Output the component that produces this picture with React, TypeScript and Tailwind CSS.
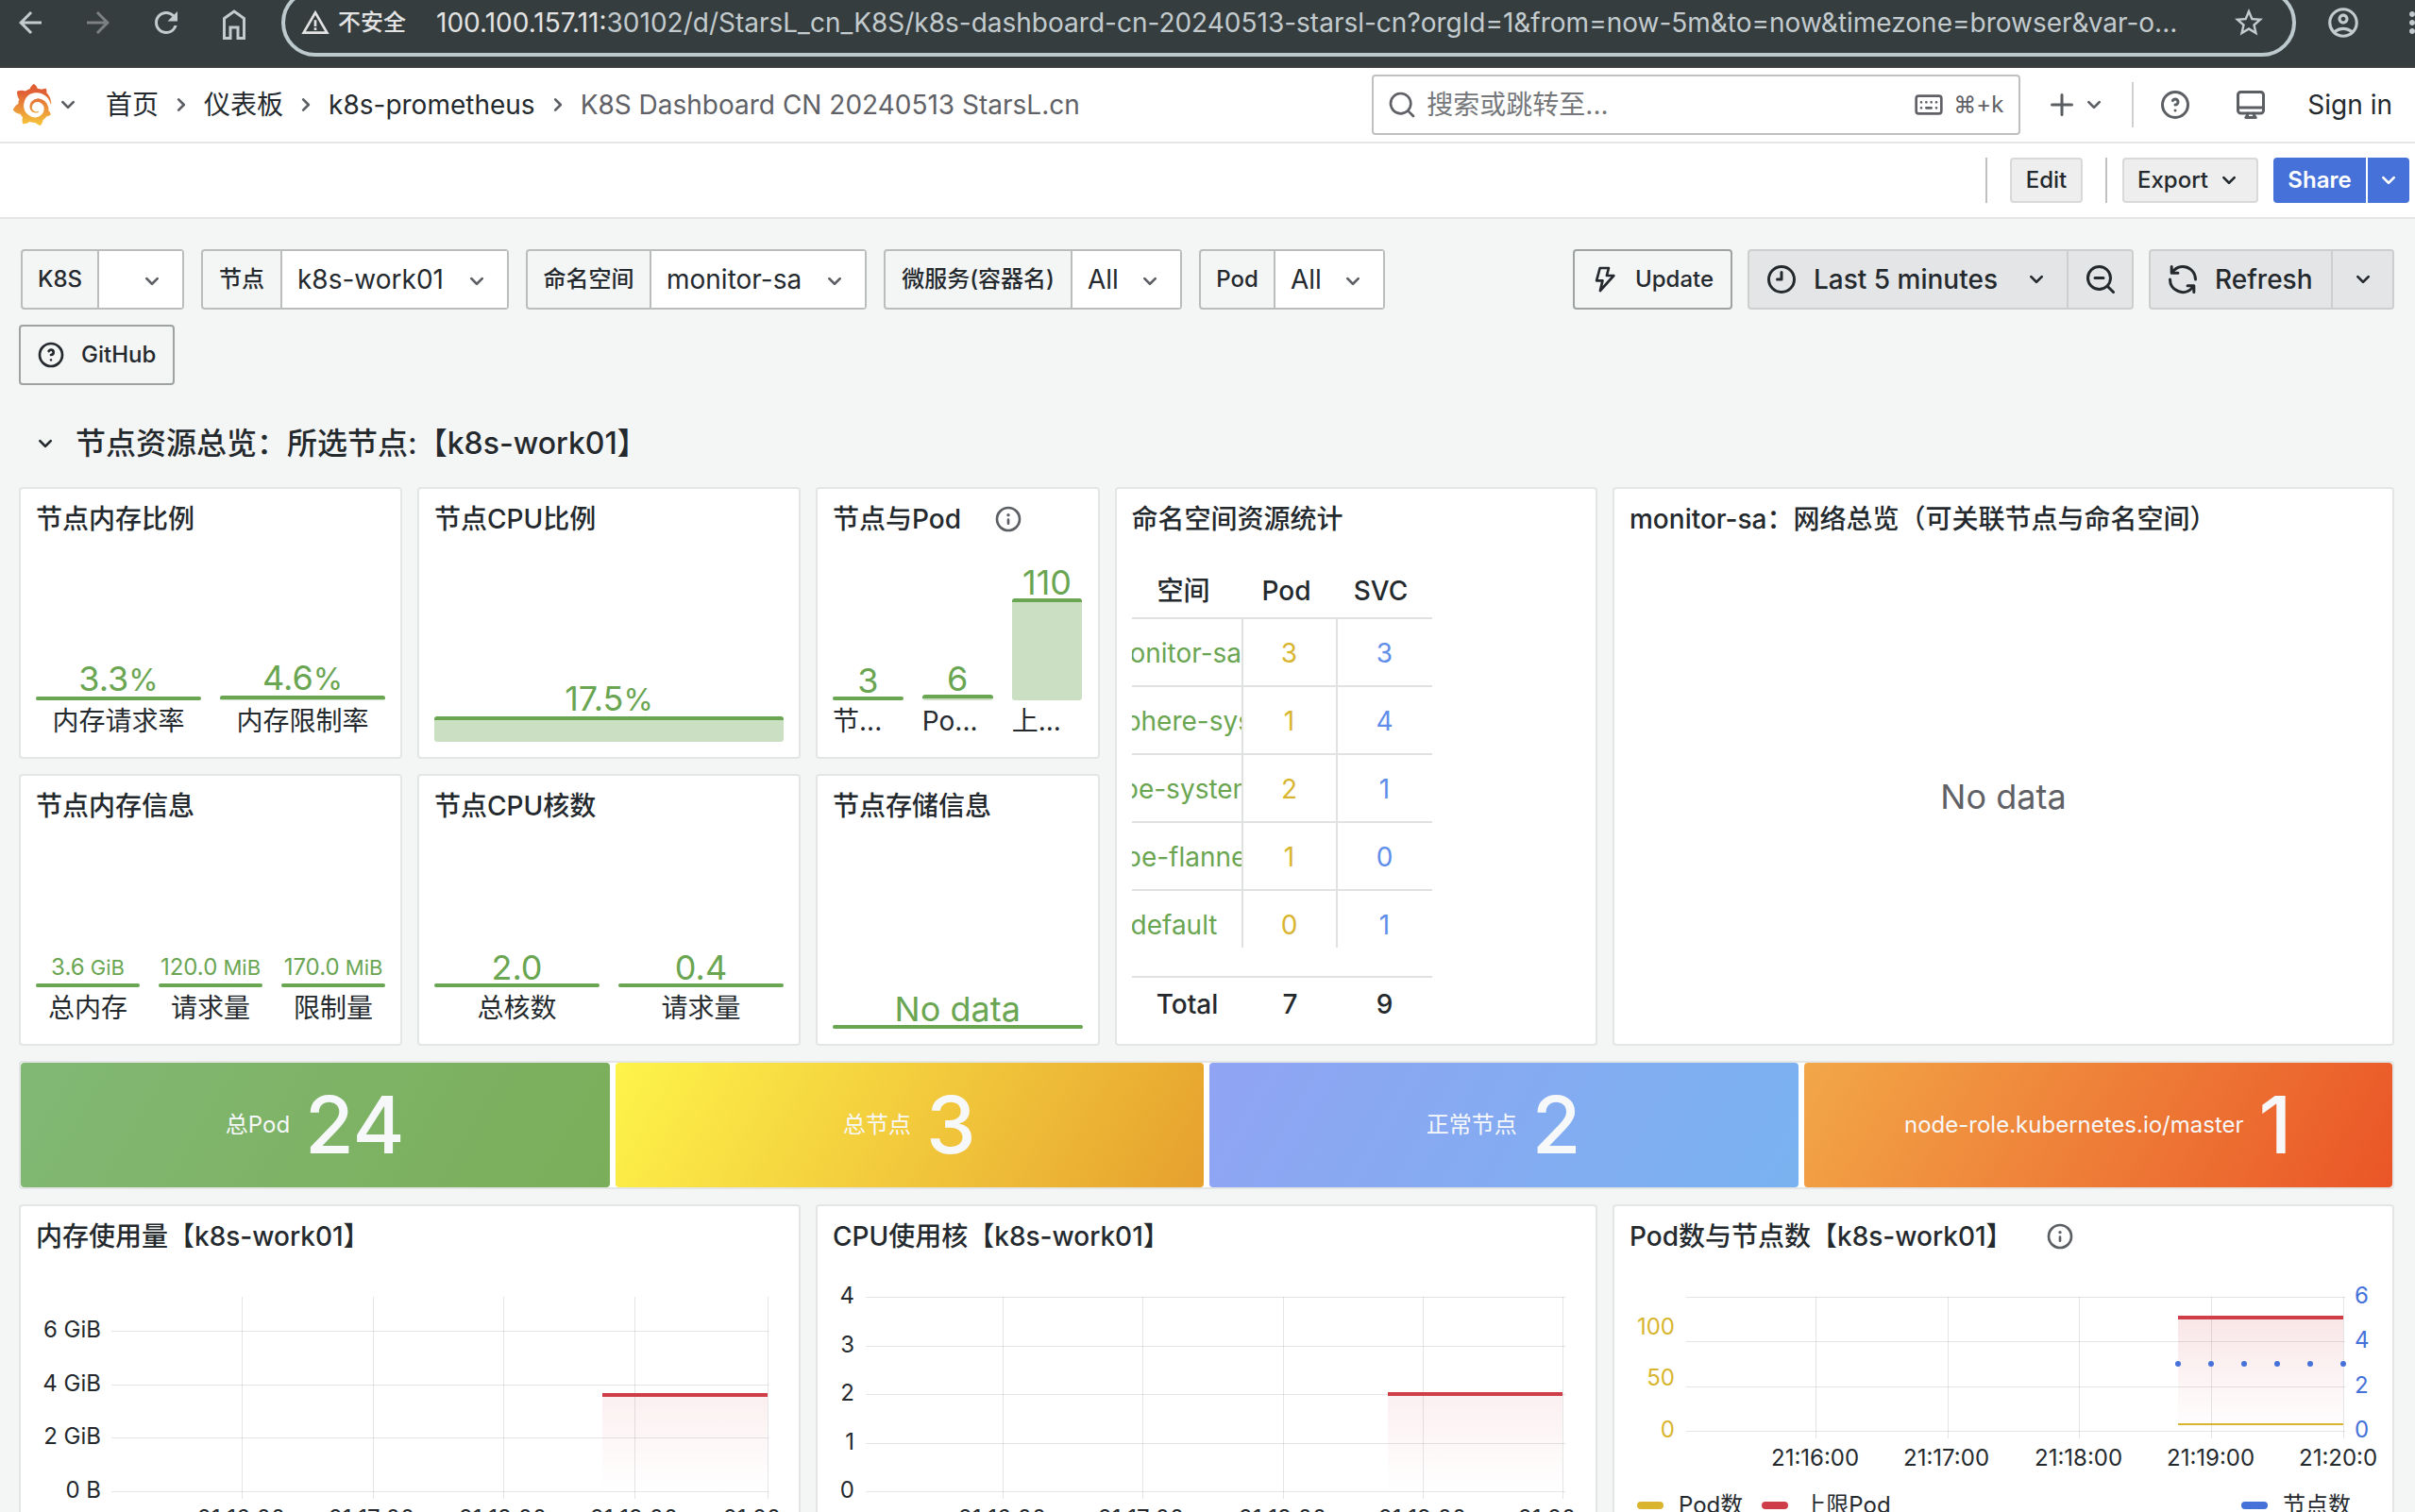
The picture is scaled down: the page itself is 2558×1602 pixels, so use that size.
import React from 'react';
import { MdArrowBack, MdArrowForward, MdMoreVert, MdOutlineAccountCircle, MdRefresh, MdStarOutline, MdWarningAmber } from 'react-icons/md';
import { SiGrafana } from 'react-icons/si';

const FONT = "font-['Inter','Noto_Sans_CJK_SC',sans-serif]";

const ICONS = {
  down: 'M17,9.17a1,1,0,0,0-1.41,0L12,12.71,8.46,9.17a1,1,0,0,0-1.41,0,1,1,0,0,0,0,1.42l4.24,4.24a1,1,0,0,0,1.42,0L17,10.59A1,1,0,0,0,17,9.17Z',
  right: 'M14.83,11.29,10.59,7.05a1,1,0,0,0-1.42,0,1,1,0,0,0,0,1.41L12.71,12,9.17,15.54a1,1,0,0,0,0,1.41,1,1,0,0,0,.71.29,1,1,0,0,0,.71-.29l4.24-4.24A1,1,0,0,0,14.83,11.29Z',
  question: 'M11.29,15.29a1.58,1.58,0,0,0-.12.15.76.76,0,0,0-.09.18.64.64,0,0,0-.06.18,1.36,1.36,0,0,0,0,.2.84.84,0,0,0,.08.38.9.9,0,0,0,.54.54.94.94,0,0,0,.76,0,.9.9,0,0,0,.54-.54A1,1,0,0,0,13,16a1,1,0,0,0-.29-.71A1,1,0,0,0,11.29,15.29ZM12,2A10,10,0,1,0,22,12,10,10,0,0,0,12,2Zm0,18a8,8,0,1,1,8-8A8,8,0,0,1,12,20ZM12,7A3,3,0,0,0,9.4,8.5a1,1,0,1,0,1.73,1A1,1,0,0,1,12,9a1,1,0,0,1,0,2,1,1,0,1,0,0,2,3,3,0,0,0,0-6Z',
  clock: 'M12,6a1,1,0,0,0-1,1v4H9a1,1,0,0,0,0,2h3a1,1,0,0,0,1-1V7A1,1,0,0,0,12,6Zm0-4A10,10,0,1,0,22,12,10,10,0,0,0,12,2Zm0,18a8,8,0,1,1,8-8A8,8,0,0,1,12,20Z',
  search: 'M21.71,20.29,18,16.61A9,9,0,1,0,16.61,18l3.68,3.68a1,1,0,0,0,1.42,0A1,1,0,0,0,21.71,20.29ZM11,18a7,7,0,1,1,7-7A7,7,0,0,1,11,18Z',
  zoomOut: 'M21.71,20.29,18,16.61A9,9,0,1,0,16.61,18l3.68,3.68a1,1,0,0,0,1.42,0A1,1,0,0,0,21.71,20.29ZM11,18a7,7,0,1,1,7-7A7,7,0,0,1,11,18Zm3-8H8a1,1,0,0,0,0,2h6a1,1,0,0,0,0-2Z',
  sync: 'M19.91,15.51H15.38a1,1,0,0,0,0,2h2.4A8,8,0,0,1,4,12a1,1,0,1,0-2,0,10,10,0,0,0,16.88,7.23V21a1,1,0,0,0,2,0V16.5A1,1,0,0,0,19.91,15.51ZM12,2A10,10,0,0,0,5.12,4.77V3a1,1,0,0,0-2,0V7.5a1,1,0,0,0,1,1h4.5a1,1,0,0,0,0-2H6.22A8,8,0,0,1,20,12a1,1,0,0,0,2,0A10,10,0,0,0,12,2Z',
  plus: 'M19,11H13V5a1,1,0,0,0-2,0v6H5a1,1,0,0,0,0,2h6v6a1,1,0,0,0,2,0V13h6a1,1,0,0,0,0-2Z',
  info: 'M12,2A10,10,0,1,0,22,12,10,10,0,0,0,12,2Zm0,18a8,8,0,1,1,8-8A8,8,0,0,1,12,20Zm0-8.5a1,1,0,0,0-1,1v3a1,1,0,0,0,2,0v-3A1,1,0,0,0,12,11.5Zm0-4a1.25,1.25,0,1,0,1.25,1.25A1.25,1.25,0,0,0,12,7.5Z',
};

function Icon({ name, className = 'size-8' }: { name: keyof typeof ICONS; className?: string }) {
  return (
    <svg viewBox="0 0 24 24" fill="currentColor" aria-hidden="true" className={`shrink-0 ${className}`}>
      <path d={ICONS[name]}/>
    </svg>
  );
}

function LineIcon({ children, className = 'size-8' }: { children: React.ReactNode; className?: string }) {
  return (
    <svg viewBox="0 0 24 24" fill="none" stroke="currentColor" strokeWidth={2} strokeLinejoin="round" strokeLinecap="round" aria-hidden="true" className={`shrink-0 ${className}`}>
      {children}
    </svg>
  );
}

function BrowserBar() {
  return (
    <div className="flex h-[72px] items-start overflow-hidden border-b-2 border-[#403f3f] bg-[#353d3f] text-[#c3cbce]">
      <div className="flex h-12 shrink-0 items-center gap-9 pl-[14px]">
        <button aria-label="Back"><MdArrowBack className="size-9"/></button>
        <button aria-label="Forward" className="text-[#7c8080]"><MdArrowForward className="size-9"/></button>
        <button aria-label="Reload"><MdRefresh className="size-9"/></button>
        <button aria-label="Home">
          <svg viewBox="0 0 36 36" fill="none" stroke="currentColor" strokeWidth="3" className="size-9">
            <path d="M7.5 14 18 6.500 28.500 14v21h-6.500v-11.500h-8v11.500h-6.500Z" transform="translate(0 -.5)"/>
          </svg>
        </button>
      </div>
      <div className="-mt-3 ml-8 flex h-[72px] min-w-0 flex-1 items-center rounded-full border-4 border-[#bccace] pr-7 pl-4">
        <MdWarningAmber className="size-8 shrink-0 text-[#e3e3e3]"/>
        <span className="ml-2 shrink-0 text-2xl font-medium text-[#e3e3e3]">不安全</span>
        <span className="ml-8 min-w-0 flex-1 truncate text-[28px]">
          <span className="text-[#e3e3e3]">100.100.157.11:</span>30102/d/StarsL_cn_K8S/k8s-dashboard-cn-20240513-starsl-cn?orgId=1&amp;from=now-5m&amp;to=now&amp;timezone=browser&amp;var-o...
        </span>
        <button aria-label="Bookmark"><MdStarOutline className="size-9"/></button>
      </div>
      <div className="flex h-12 w-[126px] shrink-0 items-center pl-[31px]">
        <button aria-label="Profile" className="shrink-0"><MdOutlineAccountCircle className="size-[38px]"/></button>
        <button aria-label="Menu" className="ml-9 shrink-0"><MdMoreVert className="size-9"/></button>
      </div>
    </div>
  );
}

function NavBar() {
  const crumbs = ['首页', '仪表板', 'k8s-prometheus'];
  return (
    <header className="flex h-20 items-center border-b-2 border-[#e4e5e5] bg-white pr-6 pl-3 text-[28px] text-[#24292e]">
      <button aria-label="Home menu" className="flex items-center text-[#5b5e63]">
        <svg width="0" height="0" aria-hidden="true">
          <linearGradient id="logo" x1="0" y1="0" x2="0" y2="1">
            <stop offset="0.2" stopColor="#e05f35"/>
            <stop offset="1" stopColor="#f6c63c"/>
          </linearGradient>
        </svg>
        <SiGrafana className="h-12 w-11" style={{ fill: 'url(#logo)' }}/>
        <Icon name="down"/>
      </button>
      <nav aria-label="Breadcrumbs" className="ml-6 flex flex-1 items-center gap-2 whitespace-nowrap">
        {crumbs.map(c => (
          <React.Fragment key={c}>
            <a href="#">{c}</a>
            <Icon name="right" className="size-8 text-[#5b5e63]"/>
          </React.Fragment>
        ))}
        <span className="text-[#5f6166]">K8S Dashboard CN 20240513 StarsL.cn</span>
      </nav>
      <label className="flex h-16 w-[687px] shrink-0 items-center rounded-[4px] border-2 border-[#bfc0c0] pr-4 pl-[14px] text-[#5f6166]">
        <Icon name="search"/>
        <input type="text" placeholder="搜索或跳转至..." aria-label="搜索或跳转至..." className="ml-2.5 min-w-0 flex-1 outline-none placeholder:text-[#75777b]"/>
        <LineIcon>
          <rect x="2" y="5" width="20" height="14" rx="2"/>
          <path d="M6 10h.01M10 10h.01M14 10h.01M18 10h.01M6 14.500h.01M10 14.500h4M18 14.500h.01"/>
        </LineIcon>
        <span className="ml-2.5 text-2xl">⌘+k</span>
      </label>
      <div className="flex shrink-0 items-center text-[#5b5e63]">
        <button aria-label="New" className="ml-[26px] flex items-center">
          <Icon name="plus" className="size-9"/>
          <Icon name="down"/>
        </button>
        <div className="ml-6 h-12 w-0.5 bg-[#cfd0d0]"/>
        <button aria-label="Help" className="ml-[26px]"><Icon name="question" className="size-9"/></button>
        <button aria-label="Kiosk mode" className="ml-11">
          <LineIcon className="size-9">
            <rect x="3" y="3" width="18" height="15" rx="2"/>
            <path d="M3 14h18M10 18c0 1.500-.5 2-1.500 3h7c-1-1-1.500-1.500-1.500-3"/>
          </LineIcon>
        </button>
        <a href="#" className="ml-[42px] text-[#24292e]">Sign in</a>
      </div>
    </header>
  );
}

function ActionBar() {
  return (
    <div className="flex h-20 items-center justify-end border-b-2 border-[#e4e5e5] bg-white pr-1.5 text-2xl font-medium text-[#24292e]">
      <div className="h-12 w-0.5 bg-[#bfc0c0]"/>
      <button className="ml-6 h-12 w-[77px] rounded-[4px] border-2 border-[#d8d9d9] bg-[#eeeeee]">Edit</button>
      <div className="ml-6 h-12 w-0.5 bg-[#bfc0c0]"/>
      <button className="ml-4 flex h-12 w-36 items-center rounded-[4px] border-2 border-[#d8d9d9] bg-[#eeeeee] pl-3.5">
        Export<Icon name="down" className="ml-1.5 size-8"/>
      </button>
      <button className="ml-4 h-12 w-[98px] rounded-l-[4px] bg-[#4571d9] font-semibold text-white">Share</button>
      <button aria-label="Share options" className="ml-0.5 flex h-12 w-11 items-center justify-center rounded-r-[4px] bg-[#4571d9] text-white"><Icon name="down"/></button>
    </div>
  );
}

function Variable({ id, label, value, labelWidth, width }: { id: string; label: string; value: string; labelWidth: string; width: string }) {
  return (
    <div className="flex h-16 rounded-[4px] border-2 border-[#bbbdbd]">
      <label htmlFor={id} className={`flex items-center justify-center border-r-2 border-[#bbbdbd] text-2xl font-medium ${labelWidth}`}>{label}</label>
      <div className={`relative bg-white ${width}`}>
        <select id={id} className="size-full appearance-none pl-4 text-[28px] outline-none">
          <option>{value}</option>
        </select>
        <Icon name="down" className="pointer-events-none absolute top-4 right-4 size-8 text-[#5b5e63]"/>
      </div>
    </div>
  );
}

function Controls() {
  const grey = 'flex h-16 items-center border-2 border-[#cdcfcf] bg-[#e4e5e7]';
  return (
    <div className="flex items-start gap-4 pl-0.5">
      <div className="flex flex-1 items-start gap-[18px] whitespace-nowrap">
        <Variable id="k8s" label="K8S" value="" labelWidth="w-[81px]" width="w-[88px]"/>
        <Variable id="node" label="节点" value="k8s-work01" labelWidth="w-[84px]" width="w-[238px]"/>
        <Variable id="ns" label="命名空间" value="monitor-sa" labelWidth="w-[131px]" width="w-[226px]"/>
        <Variable id="svc" label="微服务(容器名)" value="All" labelWidth="w-[198px]" width="w-[114px]"/>
        <Variable id="pod" label="Pod" value="All" labelWidth="w-[79px]" width="w-[114px]"/>
      </div>
      <a href="#" className="flex h-16 w-[169px] items-center rounded-[4px] border-2 border-[#9fa2a2] pl-4 text-2xl font-medium">
        <LineIcon>
          <path d="M8 3h7l-1.600 6H19L8.200 21l1.900-8H5.300Z"/>
        </LineIcon>
        <span className="ml-4">Update</span>
      </a>
      <div className="flex text-[28px] font-medium">
        <button className={`${grey} w-[338px] rounded-l-[4px] border-r-0 pl-4`}>
          <Icon name="clock" className="size-9"/>
          <span className="ml-4">Last 5 minutes</span>
          <Icon name="down" className="ml-auto mr-4 size-8"/>
        </button>
        <button aria-label="Zoom out" className={`${grey} w-[71px] justify-center rounded-r-[4px]`}><Icon name="zoomOut" className="size-9"/></button>
      </div>
      <div className="flex text-[28px] font-medium">
        <button className={`${grey} w-[193px] rounded-l-[4px] border-r-0 pl-4`}>
          <Icon name="sync" className="size-9"/>
          <span className="ml-4">Refresh</span>
        </button>
        <button aria-label="Refresh interval" className={`${grey} w-[67px] justify-center rounded-r-[4px]`}><Icon name="down"/></button>
      </div>
    </div>
  );
}

function Panel({ title, info, className, children }: { title: string; info?: boolean; className: string; children?: React.ReactNode }) {
  return (
    <section className={`flex min-w-0 flex-col overflow-hidden rounded-[4px] border-2 border-[#e4e5e5] bg-white ${className}`}>
      <h2 className="flex h-16 shrink-0 items-center px-4 text-[28px] font-medium whitespace-nowrap">
        {title}
        {info && <Icon name="info" className="ml-[34px] size-8 text-[#5b5e63]"/>}
      </h2>
      {children}
    </section>
  );
}

type Gauge = { value: string; unit?: string; label?: string; height?: number; small?: boolean; cut?: boolean };

function BarGauge({ items }: { items: Gauge[] }) {
  return (
    <div className="flex flex-1 items-end gap-5 px-4 pb-4">
      {items.map(g => (
        <div key={g.value} className="min-w-0 flex-1 text-center">
          <div className={`leading-[34px] whitespace-nowrap text-[#6aa552] ${g.small ? 'text-2xl' : 'text-4xl'}`}>
            {g.value}
            {g.unit && <span className={g.small ? 'text-[22px] leading-[34px]' : 'text-[32px] leading-[34px]'}>{g.unit}</span>}
          </div>
          <div className="rounded-[3px] border-t-4 border-[#6aa552] bg-[#cbdfc3]" style={{ height: g.height ?? 4 }}/>
          {g.label && <div className={`h-11 text-[28px] leading-[44px] whitespace-nowrap ${g.cut ? 'text-left' : ''}`}>{g.label}</div>}
        </div>
      ))}
    </div>
  );
}

const NAMESPACES = [
  ['monitor-sa', 3, 3],
  ['kubesphere-system', 1, 4],
  ['kube-system', 2, 1],
  ['kube-flannel', 1, 0],
  ['default', 0, 1],
];

function NamespaceTable() {
  return (
    <table className="ml-4 w-[318px] table-fixed border-separate border-spacing-0 text-center text-[28px]">
      <colgroup><col className="w-[118px]"/><col className="w-[100px]"/><col className="w-[100px]"/></colgroup>
      <thead>
        <tr className="h-[74px]">
          {['空间', 'Pod', 'SVC'].map(h => <th key={h} className="border-b-2 border-[#e0e1e1] pt-4 pr-2 font-medium">{h}</th>)}
        </tr>
      </thead>
      <tbody>
        {NAMESPACES.map(([ns, pods, svcs], i) => {
          const last = i === NAMESPACES.length - 1;
          const line = last ? 'h-[60px] border-[#e0e1e1]' : 'h-[72px] border-b-2 border-[#e0e1e1]';
          const box = last ? 'h-[60px] leading-[72px]' : 'h-[70px] leading-[72px]';
          return (
            <tr key={ns}>
              <td className={`border-r-2 p-0 text-[#6aa552] ${line}`}>
                <div className={`flex justify-center overflow-hidden pr-[26px] whitespace-nowrap ${box}`}><span>{ns}</span></div>
              </td>
              <td className={`border-r-2 p-0 text-[#d9b52f] ${line}`}><div className={box}>{pods}</div></td>
              <td className={`p-0 text-[#5f8eea] ${line}`}><div className={box}>{svcs}</div></td>
            </tr>
          );
        })}
      </tbody>
      <tfoot>
        <tr className="h-[30px]"><td colSpan={3}/></tr>
        <tr className="h-[58px] font-medium">
          {['Total', '7', '9'].map(t => <td key={t} className="border-t-2 border-[#e0e1e1] p-0">{t}</td>)}
        </tr>
      </tfoot>
    </table>
  );
}

const STATS = [
  { label: '总Pod', value: 24, bg: 'bg-[linear-gradient(120deg,#81b874,#7bae59)]' },
  { label: '总节点', value: 3, bg: 'bg-[linear-gradient(120deg,#fef44a,#e6a02e)]' },
  { label: '正常节点', value: 2, bg: 'bg-[linear-gradient(120deg,#90a4f3,#79b2f0)]' },
  { label: 'node-role.kubernetes.io/master', value: 1, bg: 'bg-[linear-gradient(120deg,#f2a748,#ea5527)]' },
];

type Tick = [number, string];
type ChartProps = {
  id: string; height: number; left: number; right: number; bottom: number;
  rows: number[]; cols: number[]; yTicks: Tick[]; xLabels: string[]; xBase: number;
  tickEnd: number; tickColor?: string; start: number; top: number; fill: number; children?: React.ReactNode;
};

function Chart(p: ChartProps) {
  const end = p.cols[p.cols.length - 1];
  const floor = p.rows[p.rows.length - 1];
  return (
    <svg viewBox={`0 0 824 ${p.height}`} className="w-full shrink-0 text-2xl" fill="#24292e">
      <linearGradient id={p.id} x1="0" y1="0" x2="0" y2="1">
        <stop offset="0" stopColor="#cf3d48" stopOpacity={p.fill}/>
        <stop offset="1" stopColor="#cf3d48" stopOpacity="0"/>
      </linearGradient>
      <g stroke="#24292e" strokeOpacity="0.12" strokeWidth="1" shapeRendering="crispEdges">
        {p.rows.map(y => <path key={y} d={`M${p.left} ${y}H${p.right}`}/>)}
        {p.cols.map(x => <path key={x} d={`M${x} 32V${p.bottom}`}/>)}
      </g>
      {p.yTicks.map(([y, t]) => <text key={t} x={p.tickEnd} y={y} textAnchor="end" fill={p.tickColor}>{t}</text>)}
      {p.xLabels.map((t, i) => <text key={t} x={p.cols[i] - 47} y={p.xBase}>{t}</text>)}
      <rect x={p.start} y={p.top} width={end - p.start} height={floor - p.top} fill={`url(#${p.id})`}/>
      <path d={`M${p.start} ${p.top}H${end}`} stroke="#cf3d48" strokeWidth="4"/>
      {p.children}
    </svg>
  );
}

function Legend({ color, label }: { color: string; label: string }) {
  return (
    <button className="flex items-center gap-4">
      <span className={`h-2 w-7 rounded-full ${color}`}/>{label}
    </button>
  );
}

export default function App() {
  return (
    <div className={`h-screen overflow-hidden bg-[#f4f5f5] text-[#24292e] ${FONT}`}>
      <BrowserBar/>
      <NavBar/>
      <ActionBar/>
      <main className="pt-8 pr-[22px] pl-5">
        <Controls/>
        <a href="#" className="mt-4 flex h-16 w-[165px] items-center rounded-[4px] border-2 border-[#9fa2a2] pl-4 text-2xl font-medium">
          <Icon name="question"/>
          <span className="ml-4">GitHub</span>
        </a>
        <button className="mt-[30px] flex h-16 items-center text-[32px] font-medium">
          <Icon name="down" className="mx-3 size-8"/>
          <span className="ml-1">节点资源总览：所选节点:【k8s-work01】</span>
        </button>

        <div className="mt-[14px] grid auto-rows-[60px] grid-cols-24 gap-4">
          <Panel title="节点内存比例" className="col-span-4 row-span-4">
            <BarGauge items={[{ value: '3.3', unit: '%', label: '内存请求率' }, { value: '4.6', unit: '%', label: '内存限制率', height: 5 }]}/>
          </Panel>
          <Panel title="节点CPU比例" className="col-span-4 row-span-4">
            <BarGauge items={[{ value: '17.5', unit: '%', height: 27 }]}/>
          </Panel>
          <Panel title="节点与Pod" info className="col-span-3 row-span-4">
            <BarGauge items={[
              { value: '3', label: '节...', cut: true },
              { value: '6', label: 'Po...', height: 6, cut: true },
              { value: '110', label: '上...', height: 108, cut: true },
            ]}/>
          </Panel>
          <Panel title="命名空间资源统计" className="col-span-5 row-span-8">
            <NamespaceTable/>
          </Panel>
          <Panel title="monitor-sa：网络总览（可关联节点与命名空间）" className="col-span-8 row-span-8">
            <div className="flex flex-1 items-center justify-center text-4xl text-[#5f6166]">No data</div>
          </Panel>
          <Panel title="节点内存信息" className="col-span-4 row-span-4">
            <BarGauge items={[
              { value: '3.6', unit: ' GiB', label: '总内存', small: true },
              { value: '120.0', unit: ' MiB', label: '请求量', small: true },
              { value: '170.0', unit: ' MiB', label: '限制量', small: true },
            ]}/>
          </Panel>
          <Panel title="节点CPU核数" className="col-span-4 row-span-4">
            <BarGauge items={[{ value: '2.0', label: '总核数' }, { value: '0.4', label: '请求量' }]}/>
          </Panel>
          <Panel title="节点存储信息" className="col-span-3 row-span-4">
            <BarGauge items={[{ value: 'No data' }]}/>
          </Panel>

          <section className="col-span-24 row-span-2 grid grid-cols-4 gap-1.5 rounded-[4px] border-2 border-[#e4e5e5] bg-white">
            {STATS.map(s => (
              <div key={s.label} className={`flex items-center justify-center gap-4 rounded-[4px] text-[#f7f8fa] ${s.bg}`}>
                <span className="text-2xl">{s.label}</span>
                <span className="text-[84px] leading-none font-medium">{s.value}</span>
              </div>
            ))}
          </section>

          <Panel title="内存使用量【k8s-work01】" className="col-span-8 row-span-7">
            <Chart
              id="mem" height={330} left={96} right={792} bottom={246} rows={[68, 125, 181, 238]} cols={[234, 373, 511, 650, 791]}
              yTicks={[[75, '6 GiB'], [132, '4 GiB'], [188, '2 GiB'], [245, '0 B']]} tickEnd={85}
              xLabels={['21:16:00', '21:17:00', '21:18:00', '21:19:00', '21:20:']} xBase={275} start={616} top={136} fill={0.08}
            />
          </Panel>
          <Panel title="CPU使用核【k8s-work01】" className="col-span-8 row-span-7">
            <Chart
              id="cpu" height={330} left={51} right={792} bottom={246} rows={[32, 84, 135, 187, 238]} cols={[196, 344, 493, 641, 789]}
              yTicks={[[39, '4'], [91, '3'], [142, '2'], [194, '1'], [245, '0']]} tickEnd={39}
              xLabels={['21:16:00', '21:17:00', '21:18:00', '21:19:00', '21:20:']} xBase={275} start={604} top={135} fill={0.08}
            />
          </Panel>
          <Panel title="Pod数与节点数【k8s-work01】" info className="col-span-8 row-span-7">
            <Chart
              id="pods" height={236} left={76} right={774} bottom={182} rows={[32, 79, 127, 174]} cols={[213, 353, 492, 632, 772]}
              yTicks={[[72, '100'], [126, '50'], [181, '0']]} tickEnd={64} tickColor="#d9b52f"
              xLabels={['21:16:00', '21:17:00', '21:18:00', '21:19:00', '21:20:0']} xBase={211} start={597} top={54} fill={0.13}
            >
              <path d="M597 167H772" stroke="#d9b52f" strokeWidth="2"/>
              {[597, 632, 667, 702, 737, 772].map(x => <circle key={x} cx={x} cy={103} r={3} fill="#4571d9"/>)}
              {[[39, '6'], [86, '4'], [134, '2'], [181, '0']].map(([y, t]) => <text key={t} x={784} y={y} fill="#4571d9">{t}</text>)}
            </Chart>
            <div className="flex h-[34px] items-center gap-5 pr-11 pl-6 text-2xl">
              <Legend color="bg-[#d9b52f]" label="Pod数"/>
              <Legend color="bg-[#cf3d48]" label="上限Pod"/>
              <div className="flex-1"/>
              <Legend color="bg-[#4571d9]" label="节点数"/>
            </div>
          </Panel>
        </div>
      </main>
    </div>
  );
}
